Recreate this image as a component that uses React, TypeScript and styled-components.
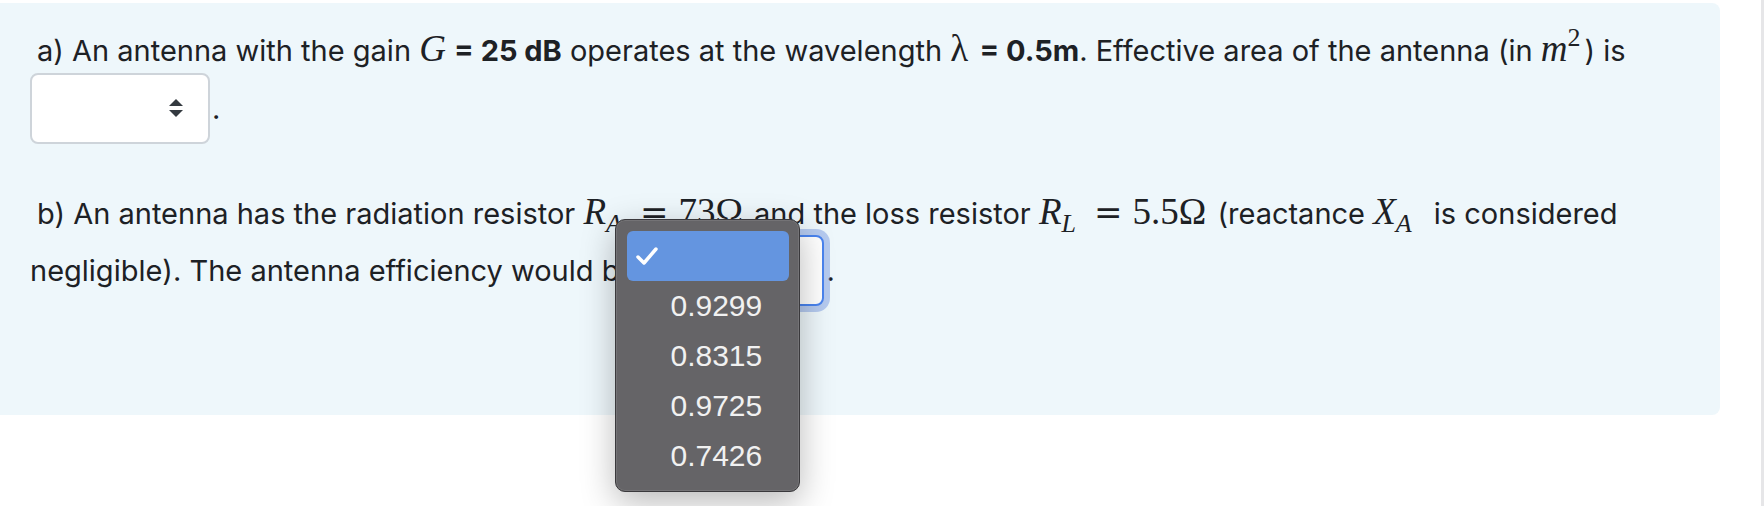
import React from 'react'
import styled, { createGlobalStyle } from 'styled-components'

const GlobalStyle = createGlobalStyle`
  body {
    margin: 0;
    background: #fff;
    font-family: Inter, "Noto Sans", sans-serif;
    color: #1d2125;
  }
`

const OPTIONS = ['0.9299', '0.8315', '0.9725', '0.7426']

function Chevron() {
  return (
    <svg width="16" height="20" viewBox="0 0 16 20">
      <polygon points="8,1 15,8 1,8" fill="#343a40" />
      <polygon points="1,12 15,12 8,19" fill="#343a40" />
    </svg>
  )
}

function Check() {
  return (
    <svg width="22" height="20" viewBox="0 0 22 20">
      <polyline points="2,11 8,17 20,3" fill="none" stroke="#fff" strokeWidth="3.5" strokeLinecap="round" strokeLinejoin="round" />
    </svg>
  )
}

function Popup({ options }: { options: string[] }) {
  return (
    <Menu>
      <MenuItem $active>
        <CheckCell>
          <Check />
        </CheckCell>
      </MenuItem>
      {options.map((o) => (
        <MenuItem key={o}>
          <CheckCell />
          {o}
        </MenuItem>
      ))}
    </Menu>
  )
}

function Dropdown({ open }: { open?: boolean }) {
  return (
    <Select $focused={open}>
      <Value>&nbsp;</Value>
      <Chevron />
      {open && <Popup options={OPTIONS} />}
    </Select>
  )
}

export default function App() {
  return (
    <>
      <GlobalStyle />
      <Page>
        <Main>
          <Panel>
            <Para $gap={48}>
              <Lead>a) An antenna with the gain </Lead>
              <Mi>G</Mi> <strong>= 25 dB</strong> operates at the wavelength <Mn>λ</Mn>{' '}
              <strong>= 0.5m</strong>. Effective area of the antenna (in <Mi>m</Mi>
              <Sup>2</Sup>) is
              <br />
              <Dropdown />.
            </Para>
            <Para $gap={79}>
              <Lead>b) An antenna has the radiation resistor </Lead>
              <Mi>R</Mi>
              <Sub>A</Sub>
              <Mo>=</Mo>
              <Mn>73Ω</Mn> and the loss resistor <Mi>R</Mi>
              <Sub>L</Sub>
              <Mo>=</Mo>
              <Mn>5.5Ω</Mn> (reactance <Mi>X</Mi>
              <Sub $wide>A</Sub> is considered
              <br />
              negligible). The antenna efficiency would be <Dropdown open />.
            </Para>
          </Panel>
        </Main>
        <Gutter />
      </Page>
    </>
  )
}

const Page = styled.div`
  display: flex;
  height: 506px;
  overflow: hidden;
`

const Main = styled.div`
  flex: 1;
  padding-top: 3px;
`

const Gutter = styled.div`
  width: 3px;
  background: #e6e6e8;
`

const Panel = styled.div`
  width: 1720px;
  box-sizing: border-box;
  padding: 26px 30px 30px 30px;
  background: #eef7fb;
  border-radius: 0 8px 8px 0;
  font-size: 29px;
  line-height: 1.5;
`

const Para = styled.p<{ $gap: number }>`
  margin: 0 0 ${({ $gap }) => $gap}px;
  white-space: nowrap;
`

const Lead = styled.span`
  margin-left: 7px;
`

const Mi = styled.span`
  font-family: "Liberation Serif", serif;
  font-style: italic;
  font-size: 37px;
  line-height: 0;
`

const Mn = styled.span`
  font-family: "Liberation Serif", serif;
  font-size: 37px;
  line-height: 0;
  margin-right: 3px;
`

const Mo = styled.span`
  font-family: "DejaVu Serif", serif;
  font-size: 34px;
  line-height: 0;
  margin: 0 10px;
`

const Sub = styled.span<{ $wide?: boolean }>`
  font-family: "Liberation Serif", serif;
  font-style: italic;
  font-size: 26px;
  vertical-align: -8px;
  line-height: 0;
  margin-right: ${({ $wide }) => ($wide ? 14 : 8)}px;
`

const Sup = styled.span`
  font-family: "Liberation Serif", serif;
  font-size: 26px;
  vertical-align: 15px;
  line-height: 0;
  margin-right: 4px;
`

const Select = styled.span<{ $focused?: boolean }>`
  position: relative;
  display: inline-flex;
  align-items: center;
  box-sizing: border-box;
  width: 180px;
  height: 71px;
  padding: 0 24px 0 12px;
  background: #fff;
  border: 2px solid ${({ $focused }) => ($focused ? '#4a84ef' : '#ced4da')};
  border-radius: 8px;
  box-shadow: ${({ $focused }) => ($focused ? '0 0 0 6px rgba(90, 130, 220, 0.38)' : 'none')};
  margin-right: 2px;
`

const Value = styled.span`
  flex: 1;
`

const Menu = styled.div`
  position: absolute;
  left: -31px;
  top: -18px;
  z-index: 10;
  width: 185px;
  box-sizing: border-box;
  padding: 11px 10px 10px 11px;
  display: flex;
  flex-direction: column;
  background: #656467;
  border: 1px solid #3a393c;
  border-radius: 10px;
  box-shadow: inset 0 0 0 1px rgba(255, 255, 255, 0.1), 0 10px 34px rgba(0, 0, 0, 0.28);
`

const MenuItem = styled.div<{ $active?: boolean }>`
  height: 50px;
  display: flex;
  align-items: center;
  padding-left: 9px;
  border-radius: 6px;
  background: ${({ $active }) => ($active ? '#6495e0' : 'transparent')};
  color: #f1f1f1;
  font-family: "Liberation Sans", Arial, sans-serif;
  font-size: 30px;
  line-height: 1;
`

const CheckCell = styled.span`
  display: flex;
  width: 22px;
  margin-right: 12px;
`
